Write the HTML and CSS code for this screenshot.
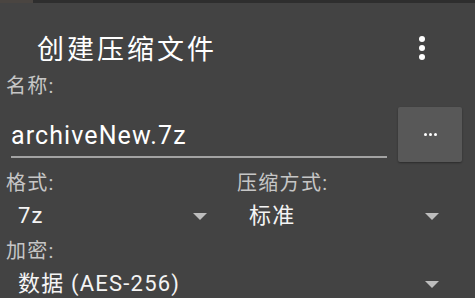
FILE: index.html
```html
<!DOCTYPE html>
<html lang="zh">
<head>
<meta charset="utf-8">
<link rel="stylesheet" href="styles.css">
</head>
<body>
<div class="topline"><div class="topline-left"></div><div class="topline-rest"></div></div>
<div class="toolbar">
  <div class="title">创建压缩文件</div>
  <div class="kebab"><span></span><span></span><span></span></div>
</div>
<div class="label first">名称:</div>
<div class="name-row">
  <div class="input"><span class="input-text">archiveNew.7z</span></div>
  <div class="browse"><span class="bdot"></span><span class="bdot"></span><span class="bdot"></span></div>
</div>
<div class="grid">
  <div class="cell">
    <div class="label">格式:</div>
    <div class="select"><span class="value">7z</span><span class="arrow"></span></div>
  </div>
  <div class="cell">
    <div class="label">压缩方式:</div>
    <div class="select"><span class="value">标准</span><span class="arrow"></span></div>
  </div>
  <div class="cell wide">
    <div class="label">加密:</div>
    <div class="select"><span class="value">数据 (AES-256)</span><span class="arrow"></span></div>
  </div>
</div>
</body>
</html>
```
FILE: styles.css
```css
html, body {
  margin: 0;
  padding: 0;
}
body {
  width: 475px;
  height: 298px;
  overflow: hidden;
  background: #434343;
  font-family: Roboto, "Noto Sans CJK SC", sans-serif;
  color: #f2f2f2;
}
.topline {
  display: flex;
  height: 3px;
}
.topline-left {
  width: 33px;
  background: #4a4541;
}
.topline-rest {
  flex: 1;
  background: #2e2e2e;
}
.toolbar {
  display: flex;
  justify-content: space-between;
  align-items: center;
  margin-top: 32px;
  height: 30px;
  padding: 0 50px 0 37px;
}
.title {
  font-size: 27px;
  letter-spacing: 3px;
  line-height: 30px;
  color: #ffffff;
}
.kebab {
  display: flex;
  flex-direction: column;
  gap: 3px;
  margin-top: -4px;
}
.kebab span {
  width: 6px;
  height: 6px;
  border-radius: 50%;
  background: #ffffff;
}
.label {
  font-size: 20px;
  letter-spacing: 1.3px;
  line-height: 24px;
  color: #c6c6c6;
  padding-left: 6px;
}
.label.first {
  margin-top: 9px;
}
.name-row {
  display: flex;
  align-items: flex-start;
  margin-top: 9px;
  padding: 0 13px 0 11px;
  gap: 11px;
}
.input {
  flex: 1;
  padding-top: 14px;
  padding-bottom: 5px;
  border-bottom: 2px solid #a3a3a3;
}
.input-text {
  display: block;
  font-size: 25px;
  letter-spacing: 1.1px;
  line-height: 30px;
  color: #ffffff;
}
.browse {
  width: 64px;
  height: 55px;
  background: #585858;
  border-radius: 2px;
  box-shadow: 0 1px 2px rgba(0,0,0,0.35);
  display: flex;
  justify-content: center;
  align-items: center;
  gap: 2px;
}
.bdot {
  width: 3px;
  height: 3px;
  border-radius: 50%;
  background: #ffffff;
}
.grid {
  display: grid;
  grid-template-columns: 231px 1fr;
  padding: 0 6px 0 6px;
  margin-top: 9px;
}
.grid .label {
  padding-left: 0;
}
.cell.wide {
  grid-column: 1 / 3;
  margin-top: 6px;
}
.select {
  display: flex;
  justify-content: space-between;
  align-items: center;
  height: 34px;
  margin-top: 4px;
  padding: 0 30px 0 12px;
}
.value {
  font-size: 22px;
  letter-spacing: 1.2px;
  line-height: 30px;
  color: #f4f4f4;
}
.arrow {
  width: 0;
  height: 0;
  border-left: 7px solid transparent;
  border-right: 7px solid transparent;
  border-top: 7px solid #bdbdbd;
}
```
